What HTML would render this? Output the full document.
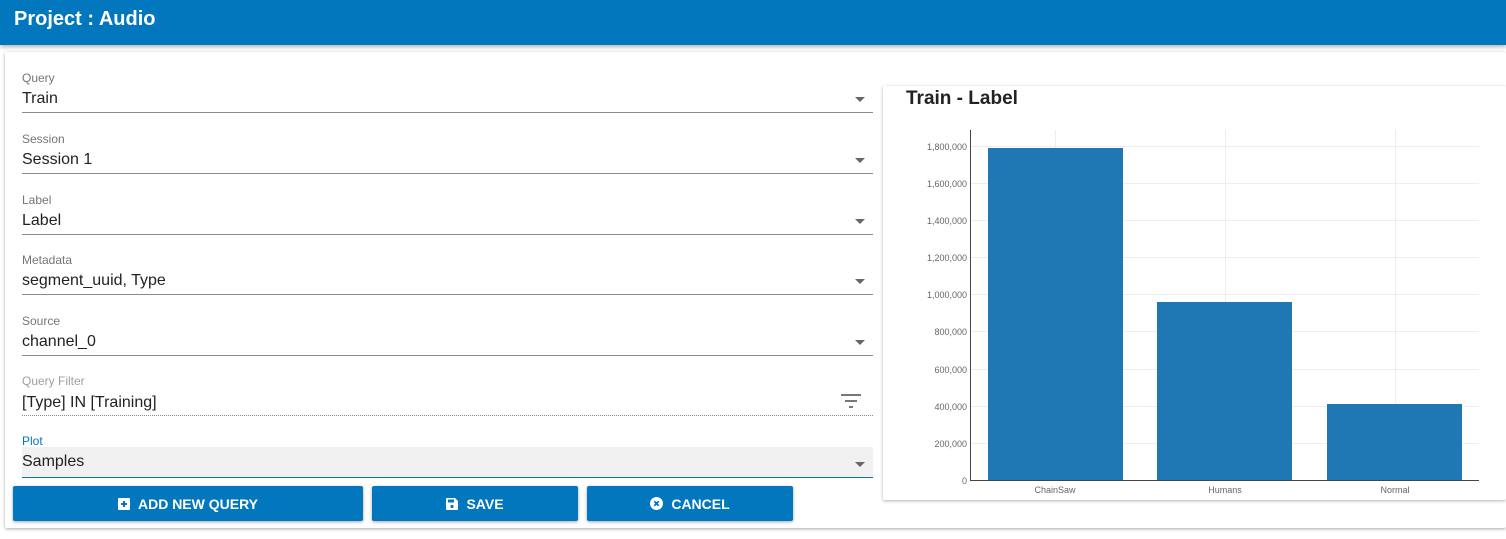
<!DOCTYPE html>
<html><head><style>
*{box-sizing:border-box;margin:0;padding:0}
body{width:1506px;height:539px;background:#fff;font-family:"Liberation Sans",Arial,sans-serif;position:relative;overflow:hidden}
.hdr{position:absolute;left:0;top:0;width:1506px;height:45px;background:#0277bd;box-shadow:0 2px 4px rgba(0,0,0,.3)}
.hdr span{position:absolute;left:14px;top:8px;color:#fff;font-size:20px;font-weight:bold}
.card{position:absolute;left:5px;top:52px;width:1501px;height:476px;background:#fff;box-shadow:0 1px 3px rgba(0,0,0,.35);border-radius:2px}
.f{position:absolute;left:22px;width:851px;height:40px;border-bottom:1px solid #8a8a8a}
.f .l{position:absolute;left:0;top:-2px;font-size:12px;color:#757575}
.f .v{position:absolute;left:0;top:17px;font-size:16px;color:#222}
.f .a{position:absolute;right:8px;top:24px;width:0;height:0;border-left:5px solid transparent;border-right:5px solid transparent;border-top:5px solid #666}
.btn{position:absolute;top:486px;height:35px;background:#0277bd;color:#fff;font-size:14px;font-weight:bold;border-radius:2px;box-shadow:0 1px 3px rgba(0,0,0,.35);display:flex;align-items:center;justify-content:center;gap:8px}
.chart{position:absolute;left:883px;top:86px;width:623px;height:414px;background:#fff;box-shadow:0 1px 3px rgba(0,0,0,.3);border-radius:2px}
</style></head><body>
<div class="hdr"><span>Project : Audio</span></div>
<div class="card"></div>
<div class="f" style="top:73px"><div class="l">Query</div><div class="v">Train</div><div class="a"></div></div>
<div class="f" style="top:134px"><div class="l">Session</div><div class="v">Session 1</div><div class="a"></div></div>
<div class="f" style="top:195px"><div class="l">Label</div><div class="v">Label</div><div class="a"></div></div>
<div class="f" style="top:255px"><div class="l">Metadata</div><div class="v">segment_uuid, Type</div><div class="a"></div></div>
<div class="f" style="top:316px"><div class="l">Source</div><div class="v">channel_0</div><div class="a"></div></div>
<div class="f" style="top:376px;border-bottom:1px dotted #888"><div class="l" style="color:#9e9e9e">Query Filter</div><div class="v" style="top:18px">[Type] IN [Training]</div>
<svg style="position:absolute;right:12px;top:18px" width="20" height="14"><rect x="0" y="0" width="20" height="2" fill="#777"/><rect x="4" y="6" width="12" height="2" fill="#777"/><rect x="8" y="12" width="4" height="2" fill="#777"/></svg></div>
<div style="position:absolute;left:22px;top:434px;font-size:12px;color:#0277bd">Plot</div>
<div class="f" style="top:447px;height:31px;background:#f1f1f1;border-bottom:1px solid #0277bd"><div class="v" style="top:6px">Samples</div><div class="a" style="top:15px"></div></div>
<div class="btn" style="left:13px;width:350px"><svg width="12" height="12"><rect width="12" height="12" rx="1" fill="#fff"/><path d="M6 3v6M3 6h6" stroke="#0277bd" stroke-width="2"/></svg>ADD NEW QUERY</div>
<div class="btn" style="left:372px;width:206px"><svg width="12" height="12"><path d="M0 1a1 1 0 0 1 1-1h8l3 3v8a1 1 0 0 1-1 1H1a1 1 0 0 1-1-1z" fill="#fff"/><rect x="2" y="1.5" width="6" height="3" fill="#0277bd"/><circle cx="6" cy="8.5" r="1.6" fill="#0277bd"/></svg>SAVE</div>
<div class="btn" style="left:587px;width:206px"><svg width="13" height="13"><circle cx="6.5" cy="6.5" r="6.5" fill="#fff"/><path d="M4.3 4.3l4.4 4.4M8.7 4.3l-4.4 4.4" stroke="#0277bd" stroke-width="1.8"/></svg>CANCEL</div>
<div class="chart"></div>
<div style="position:absolute;left:906px;top:88px;font-size:19px;font-weight:bold;color:#222">Train - Label</div>
<svg style="position:absolute;left:0;top:0" width="1506" height="539" font-family="Liberation Sans,Arial,sans-serif" font-size="9" fill="#666">
<g stroke="#eee" stroke-width="1">
<line x1="970" x2="1479" y1="146.5" y2="146.5"/><line x1="970" x2="1479" y1="183.5" y2="183.5"/><line x1="970" x2="1479" y1="220.5" y2="220.5"/><line x1="970" x2="1479" y1="257.5" y2="257.5"/><line x1="970" x2="1479" y1="294.5" y2="294.5"/><line x1="970" x2="1479" y1="331.5" y2="331.5"/><line x1="970" x2="1479" y1="369.5" y2="369.5"/><line x1="970" x2="1479" y1="406.5" y2="406.5"/><line x1="970" x2="1479" y1="443.5" y2="443.5"/>
<line x1="1055.5" x2="1055.5" y1="130" y2="480"/><line x1="1225.5" x2="1225.5" y1="130" y2="480"/><line x1="1395.5" x2="1395.5" y1="130" y2="480"/>
</g>
<rect x="988" y="148" width="135" height="332" fill="#1f77b4"/>
<rect x="1157" y="302" width="135" height="178" fill="#1f77b4"/>
<rect x="1327" y="404" width="135" height="76" fill="#1f77b4"/>
<line x1="970.5" x2="970.5" y1="130" y2="480" stroke="#444"/>
<line x1="970" x2="1479" y1="480.5" y2="480.5" stroke="#444"/>
<g text-anchor="end">
<text x="967" y="150">1,800,000</text><text x="967" y="187">1,600,000</text><text x="967" y="224">1,400,000</text><text x="967" y="261">1,200,000</text><text x="967" y="298">1,000,000</text><text x="967" y="335">800,000</text><text x="967" y="373">600,000</text><text x="967" y="410">400,000</text><text x="967" y="447">200,000</text><text x="967" y="484">0</text>
</g>
<g text-anchor="middle"><text x="1055" y="493">ChainSaw</text><text x="1225" y="493">Humans</text><text x="1395" y="493">Normal</text></g>
</svg>
</body></html>
